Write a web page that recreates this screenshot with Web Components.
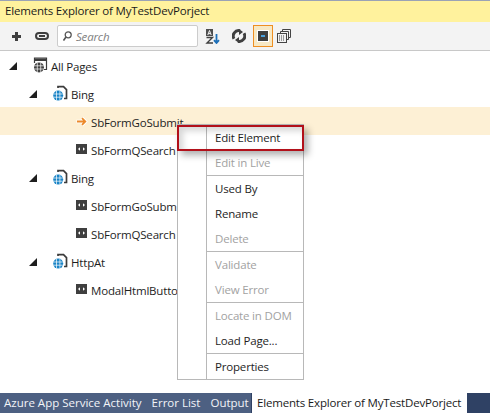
<!DOCTYPE html>
<html>
<head>
<meta charset="utf-8">
<title>Elements Explorer</title>
<style>
html, body { margin: 0; padding: 0; height: 100%; background: #fff; }
body { font: 11.5px "Open Sans", "Noto Sans", sans-serif; letter-spacing: -.18px; color: #1e1e1e; }
</style>
</head>
<body>
<explorer-panel>
    <title-bar>Elements Explorer of MyTestDevPorject</title-bar>
    <tool-bar></tool-bar>
    <page-tree></page-tree>
    <tab-strip></tab-strip>
    <context-menu></context-menu>
</explorer-panel>

<script>
const GLOBE = `<svg width="15" height="16" viewBox="0 0 15 16">
    <path d="M5 3V1.7h5.5l3 3V13.5H11" fill="none" stroke="#3c3c3c" stroke-width="1.7"/>
    <circle cx="5.2" cy="10.6" r="5" fill="#1a84c6"/>
    <path d="M.5 9h9.4M.5 12.2h9.4M3.5 5.8v9.6M6.9 5.8v9.6" stroke="#fff" stroke-width=".7" fill="none"/>
</svg>`;
const ROOT_GLOBE = `<svg width="15" height="16" viewBox="0 0 15 16">
    <path d="M1.5 6V1h12v11.5H11" fill="none" stroke="#3c3c3c" stroke-width="1.2"/>
    <path d="M1 2.7h13" stroke="#3c3c3c" stroke-width="2.6"/>
    <circle cx="6" cy="10.4" r="5" fill="#424242"/>
    <path d="M1 8.8h10M1 12h10M4.3 5.6v9.6M7.7 5.6v9.6" stroke="#fff" stroke-width=".7" fill="none"/>
</svg>`;
const FIELD = `<svg width="11" height="10" viewBox="0 0 11 10">
    <rect width="11" height="10" fill="#3f3f3f"/>
    <path d="M2 5l2-1.8v3.6zM9 5L7 3.2v3.6z" fill="#fff"/>
</svg>`;
const ARROW = `<svg width="12" height="11" viewBox="0 0 12 11">
    <path d="M.5 5.5h8.5M6 2l3.5 3.5L6 9" fill="none" stroke="#fff" stroke-width="3.4"/>
    <path d="M1 5.5h8M6 2.2l3.3 3.3L6 8.8" fill="none" stroke="#ec8a2c" stroke-width="1.8"/>
</svg>`;

class ExplorerPanel extends HTMLElement {
    constructor() {
        super();
        this.attachShadow({ mode: "open" });
    }
    connectedCallback() {
        this.shadowRoot.innerHTML = `
            <style>
                :host { display: flex; flex-direction: column; position: relative; width: 490px; height: 413px; overflow: hidden; }
            </style>
            <slot></slot>
        `;
    }
}

class TitleBar extends HTMLElement {
    constructor() {
        super();
        this.attachShadow({ mode: "open" });
    }
    connectedCallback() {
        this.shadowRoot.innerHTML = `
            <style>
                :host { display: block; height: 21px; line-height: 20px; padding-left: 5px; background: #fff29d; border-top: 1px solid #9ba3b5; color: #1a1a1a; }
            </style>
            <slot></slot>
        `;
    }
}

class ToolBar extends HTMLElement {
    constructor() {
        super();
        this.attachShadow({ mode: "open" });
    }
    connectedCallback() {
        this.shadowRoot.innerHTML = `
            <style>
                :host { display: flex; align-items: center; height: 28px; background: #f3f3f3; border-bottom: 1px solid #c8c8c8; }
                svg { display: block; flex: none; }
                .plus { margin-left: 11px; }
                .link { margin-left: 13px; }
                .search { display: flex; align-items: center; box-sizing: border-box; width: 141px; height: 22px; margin-left: 8px; padding-left: 5px; background: #fff; border: 1px solid #ccc; border-radius: 2px; }
                .search span { margin-left: 4px; color: #808080; font-style: italic; }
                .sort { margin-left: 7px; }
                .refresh { margin-left: 12px; }
                .active { display: flex; align-items: center; justify-content: center; box-sizing: border-box; width: 20px; height: 22px; margin-left: 7px; background: #f7e8c4; border: 1px solid #ee8f22; }
                .stack { margin-left: 4px; }
            </style>
            <svg class="plus" width="11" height="11" viewBox="0 0 11 11"><path d="M5.5 1v9M1 5.5h9" stroke="#3f3f3f" stroke-width="3"/></svg>
            <svg class="link" width="14" height="8" viewBox="0 0 14 8"><rect x="1" y="1" width="12" height="6" rx="3" fill="none" stroke="#3f3f3f" stroke-width="2"/><path d="M4 4h6" stroke="#3f3f3f" stroke-width="2"/></svg>
            <div class="search">
                <svg width="9" height="11" viewBox="0 0 9 11"><circle cx="5.2" cy="3.8" r="3" fill="none" stroke="#555" stroke-width="1.3"/><path d="M3 6l-2.5 3.5" stroke="#555" stroke-width="1.6"/></svg>
                <span>Search</span>
            </div>
            <svg class="sort" width="15" height="15" viewBox="0 0 15 15">
                <rect x="1" y="0" width="7" height="7" fill="#4d4d4d"/>
                <path d="M2.8 6L4.5 1.5 6.2 6M3.4 4.6h2.2" fill="none" stroke="#f3f3f3"/>
                <path d="M1.5 8.5h6L2 14h6" fill="none" stroke="#3f3f3f" stroke-width="1.4"/>
                <path d="M11.5 5v9M9 11.2l2.5 2.8 2.5-2.8" fill="none" stroke="#1e70b8" stroke-width="1.8"/>
            </svg>
            <svg class="refresh" width="14" height="14" viewBox="0 0 14 14">
                <path d="M2 9.8A5.4 5.4 0 0 1 8 1.8M12 4.2A5.4 5.4 0 0 1 6 12.2" fill="none" stroke="#3f3f3f" stroke-width="3"/>
                <path d="M7 0v6l4-3zM7 14V8l-4 3z" fill="#3f3f3f"/>
            </svg>
            <div class="active">
                <svg width="12" height="12" viewBox="0 0 12 12"><rect width="12" height="12" fill="#fff"/><rect x="1" y="1" width="10" height="10" fill="#3f3f3f"/><rect x="4" y="5" width="4" height="2" fill="#4aa0dc"/></svg>
            </div>
            <svg class="stack" width="14" height="14" viewBox="0 0 14 14">
                <path d="M5.5 2.5V.5h8v8h-2M3.5 4.5v-2h8v8h-2" fill="none" stroke="#444"/>
                <rect x=".5" y="4.5" width="9" height="9" fill="#f3f3f3" stroke="#444"/>
                <path d="M2 7h1M4 7h1M6 7h1M2 9h1M4 9h1M6 9h1M2 11h1M4 11h1M6 11h1" stroke="#444"/>
            </svg>
        `;
    }
}

class TreeRow extends HTMLElement {
    constructor() {
        super();
        this.attachShadow({ mode: "open" });
    }
    connectedCallback() {
        const level = Number(this.getAttribute("level"));
        const kind = this.getAttribute("kind");
        const icons = { root: ROOT_GLOBE, page: GLOBE, field: FIELD, arrow: ARROW };
        const lefts = [33, 53, 76];
        const caret = kind === "root" || kind === "page";
        this.shadowRoot.innerHTML = `
            <style>
                :host { display: flex; align-items: center; height: 28px; padding-left: ${lefts[level]}px; position: relative; white-space: nowrap; color: #1e1e1e; }
                :host([selected]) { background: #fdf0d5; }
                .caret { position: absolute; left: ${lefts[level] - 24}px; top: 11px; }
                .icon { display: flex; align-items: center; width: 15px; flex: none; }
                .text { margin-left: ${level === 2 ? 0 : 3}px; padding-top: 2px; }
            </style>
            ${caret ? `<svg class="caret" width="8" height="8" viewBox="0 0 8 8"><path d="M8 0v8H0z" fill="#1e1e1e"/></svg>` : ""}
            <span class="icon">${icons[kind]}</span>
            <span class="text"><slot></slot></span>
        `;
    }
}

class PageTree extends HTMLElement {
    constructor() {
        super();
        this.attachShadow({ mode: "open" });
    }
    connectedCallback() {
        const rows = [
            [0, "root", "All Pages"],
            [1, "page", "Bing"],
            [2, "arrow", "SbFormGoSubmit", true],
            [2, "field", "SbFormQSearch"],
            [1, "page", "Bing"],
            [2, "field", "SbFormGoSubmit"],
            [2, "field", "SbFormQSearch"],
            [1, "page", "HttpAt"],
            [2, "field", "ModalHtmlButton"]
        ];
        this.shadowRoot.innerHTML = `
            <style>
                :host { display: block; flex: 1; background: #fff; }
            </style>
            ${rows.map(r => `<tree-row level="${r[0]}" kind="${r[1]}"${r[3] ? " selected" : ""}>${r[2]}</tree-row>`).join("")}
        `;
    }
}

class ContextMenu extends HTMLElement {
    constructor() {
        super();
        this.attachShadow({ mode: "open" });
    }
    connectedCallback() {
        const groups = [
            [["Edit Element"], ["Edit in Live", 1]],
            [["Used By"], ["Rename"], ["Delete", 1]],
            [["Validate", 1], ["View Error", 1]],
            [["Locate in DOM", 1], ["Load Page..."]],
            [["Properties"]]
        ];
        this.shadowRoot.innerHTML = `
            <style>
                :host { display: block; position: absolute; left: 177px; top: 124px; width: 127px; box-sizing: border-box; background: #fff; border: 1px solid #b8b8b8; }
                .group { border-top: 1px solid #b8b8b8; }
                .group:first-of-type { border-top: 0; }
                .items { margin-left: 28px; border-left: 1px solid #b8b8b8; }
                .item { height: 25px; line-height: 25px; padding-left: 8px; color: #1e1e1e; white-space: nowrap; }
                .off { color: #a2a2a2; }
                .mark { position: absolute; left: -1px; top: 0; width: 127px; height: 26px; box-sizing: border-box; border: 2px solid #b2101a; box-shadow: 4px 4px 7px rgba(0,0,0,.32), inset 4px 4px 6px rgba(0,0,0,.16); }
            </style>
            <div class="items">
                ${groups.map(g => `<div class="group">${g.map(i => `<div class="item${i[1] ? " off" : ""}">${i[0]}</div>`).join("")}</div>`).join("")}
            </div>
            <div class="mark"></div>
        `;
    }
}

class TabStrip extends HTMLElement {
    constructor() {
        super();
        this.attachShadow({ mode: "open" });
    }
    connectedCallback() {
        this.shadowRoot.innerHTML = `
            <style>
                :host { display: flex; height: 20px; line-height: 20px; background: #2f4164; color: #f2f4f8; white-space: nowrap; }
                .rest { display: flex; gap: 10px; width: 247px; padding-left: 4px; background: #4d6082; letter-spacing: 0; }
                .on { width: 210px; margin-left: 1px; padding-left: 5px; background: #fff; color: #1a1a1a; line-height: 19px; }
            </style>
            <div class="rest"><span>Azure App Service Activity</span><span>Error List</span><span>Output</span></div>
            <div class="on">Elements Explorer of MyTestDevPorject</div>
        `;
    }
}

customElements.define("explorer-panel", ExplorerPanel);
customElements.define("title-bar", TitleBar);
customElements.define("tool-bar", ToolBar);
customElements.define("tree-row", TreeRow);
customElements.define("page-tree", PageTree);
customElements.define("context-menu", ContextMenu);
customElements.define("tab-strip", TabStrip);
</script>
</body>
</html>
